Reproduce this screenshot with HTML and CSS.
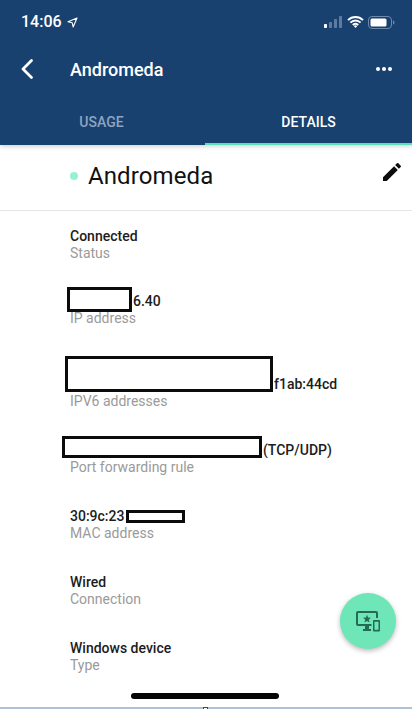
FILE: index.html
```html
<!DOCTYPE html>
<html lang="en">
<head>
<meta charset="utf-8">
<title>Andromeda</title>
<link rel="stylesheet" href="styles.css">
</head>
<body>
<div class="screen">
  <header class="header">
    <div class="status">
      <div class="clock"><span>14:06</span>
        <svg class="loc" viewBox="0 0 11 11" width="11" height="11"><path d="M10 1 1 4.800 5.200 5.800 6.200 10Z" fill="none" stroke="#fff" stroke-width="1.100" stroke-linejoin="round"/></svg>
      </div>
      <div class="sys">
        <svg width="19" height="12" viewBox="0 0 19 12"><rect x="0" y="8" width="3" height="4" rx=".7" fill="#fff"/><rect x="5" y="6" width="3" height="6" rx=".7" fill="#5d7c9f"/><rect x="10" y="3" width="3" height="9" rx=".7" fill="#5d7c9f"/><rect x="15" y="0" width="3" height="12" rx=".7" fill="#5d7c9f"/></svg>
        <svg width="17" height="12" viewBox="0 0 17 12"><path d="M1 4.200a10.500 10.500 0 0 1 15 0M3.400 6.700a7 7 0 0 1 10.200 0M5.800 9a3.600 3.600 0 0 1 5.400 0" fill="none" stroke="#fff" stroke-width="1.900"/><path d="M8.500 12 6.800 10a2.600 2.600 0 0 1 3.400 0Z" fill="#fff"/></svg>
        <svg width="27" height="13" viewBox="0 0 27 13"><rect x=".5" y=".5" width="23" height="12" rx="3.500" fill="none" stroke="#6c89a9"/><rect x="2.500" y="2.500" width="16" height="8" rx="1.500" fill="#fff"/><path d="M25 4.500c1 .3 1.500 1 1.500 2s-.5 1.700-1.500 2Z" fill="#6c89a9"/></svg>
      </div>
    </div>
    <div class="bar">
      <svg class="back" width="14" height="22" viewBox="0 0 14 22"><path d="M11.500 2.500 3 11l8.500 8.500" fill="none" stroke="#fff" stroke-width="2.800" stroke-linecap="round" stroke-linejoin="round"/></svg>
      <div class="bar-title">Andromeda</div>
      <div class="more"><i></i><i></i><i></i></div>
    </div>
    <nav class="tabs">
      <div class="tab tab-usage">USAGE</div>
      <div class="tab tab-active">DETAILS</div>
    </nav>
  </header>
  <section class="name-row">
    <span class="dot"></span>
    <h1 class="name">Andromeda</h1>
    <svg class="edit" width="24" height="24" viewBox="0 0 24 24"><path d="M3 17.250V21h3.750L17.810 9.940l-3.750-3.750L3 17.250zM20.710 7.040a1 1 0 0 0 0-1.410l-2.340-2.340a1 1 0 0 0-1.410 0l-1.830 1.830 3.750 3.750 1.830-1.830z" fill="#0d0d0d"/></svg>
  </section>
  <main class="details">
    <div class="item item-status"><div class="value">Connected</div><div class="label">Status</div></div>
    <div class="item item-ip"><div class="value"><span class="mask mask-ip"></span>6.40</div><div class="label">IP address</div></div>
    <div class="item item-v6"><div class="value"><span class="mask mask-v6"></span>f1ab:44cd</div><div class="label">IPV6 addresses</div></div>
    <div class="item item-port"><div class="value"><span class="mask mask-port"></span>(TCP/UDP)</div><div class="label">Port forwarding rule</div></div>
    <div class="item item-mac"><div class="value">30:9c:23<span class="mask mask-mac"></span></div><div class="label">MAC address</div></div>
    <div class="item item-wired"><div class="value">Wired</div><div class="label">Connection</div></div>
    <div class="item item-type"><div class="value">Windows device</div><div class="label">Type</div></div>
  </main>
  <button class="fab" type="button" aria-label="Devices">
    <svg width="24" height="21" viewBox="0 0 24 21"><path d="M2 0h18a2 2 0 0 1 2 2v5h-2V2H2v11h13.500v2H13v3h2v2H7v-2h2v-3H2a2 2 0 0 1-2-2V2a2 2 0 0 1 2-2z" fill="#256b53"/><path d="M11 3.800l1.100 2.700 2.900.2-2.200 1.900.7 2.800-2.500-1.500-2.500 1.500.7-2.800L7 6.700l2.900-.2z" fill="#256b53"/><path d="M18 9h5a1 1 0 0 1 1 1v9.500a1 1 0 0 1-1 1h-5a1 1 0 0 1-1-1V10a1 1 0 0 1 1-1zm.5 1.800v8h4v-8z" fill="#256b53"/></svg>
  </button>
  <div class="home"></div>
  <div class="edge"><span class="edge-mark"></span></div>
</div>
</body>
</html>
```
FILE: styles.css
```css
* { box-sizing: border-box; }
html, body { margin: 0; padding: 0; }
body { background: #fff; font-family: Roboto, "Liberation Sans", sans-serif; }
.screen { position: relative; width: 412px; height: 709px; overflow: hidden; background: #fff; }

.header { height: 145px; background: #184170; color: #fff; display: flex; flex-direction: column; position: relative; box-shadow: 0 1px 5px rgba(0,0,0,.22); }
.status { height: 44px; padding: 8px 17px 0 21px; display: flex; justify-content: space-between; align-items: flex-start; }
.clock { display: flex; align-items: center; gap: 5px; font-size: 16px; font-weight: 500; line-height: 28px; }
.sys { display: flex; align-items: center; gap: 4px; height: 28px; }
.bar { height: 50px; display: flex; align-items: center; padding: 0 20px; }
.back { flex: none; margin-right: 36px; }
.bar-title { font-size: 18px; font-weight: 500; flex: 1; }
.more { display: flex; gap: 2px; }
.more i { width: 4px; height: 4px; background: #fff; border-radius: 50%; display: block; }
.tabs { flex: 1; display: flex; }
.tab { text-align: center; font-size: 14px; font-weight: 500; color: #8fa5c0; padding-top: 20px; }
.tab-usage { width: 205px; padding-right: 2px; }
.tab-active { width: 207px; color: #fff; border-bottom: 2px solid #5ce0bb; }

.name-row { height: 66px; display: flex; align-items: center; padding: 0 8px 4px 70px; border-bottom: 1px solid #e6e6e6; }
.dot { width: 8px; height: 8px; border-radius: 50%; background: #93f2d4; margin-right: 10px; flex: none; }
.name { margin: 0; font-size: 24px; font-weight: 400; color: #111; flex: 1; letter-spacing: .1px; }
.edit { margin-top: -8px; }

.details { padding-left: 70px; }
.item { display: flex; flex-direction: column; align-items: flex-start; }
.value { font-size: 14px; font-weight: 500; color: #1c1c1c; line-height: 17px; height: 17px; display: flex; align-items: flex-end; white-space: nowrap; }
.label { font-size: 14px; color: #9a9a9a; line-height: 17px; height: 17px; }
.mask { display: block; background: #fff; border: 3px solid #0b0b0b; flex: none; }
.item-status { margin-top: 17px; }
.item-ip { margin-top: 31px; }
.item-v6 { margin-top: 49px; }
.item-port { margin-top: 32px; }
.item-mac { margin-top: 32px; }
.item-wired { margin-top: 32px; }
.item-type { margin-top: 32px; }
.mask-ip { width: 65px; height: 25px; margin: 0 1px -2px -3px; }
.mask-v6 { width: 208px; height: 36px; margin: 0 1px 1px -5px; }
.mask-port { width: 200px; height: 22px; margin: 0 1px 1px -8px; }
.mask-mac { width: 59px; height: 13px; margin: 0 0 2px 2px; }

.fab { position: absolute; left: 340px; top: 593px; width: 56px; height: 56px; border: 0; border-radius: 50%; background: #6ee6b8; box-shadow: 0 2px 5px rgba(0,0,0,.28); display: flex; align-items: center; justify-content: center; padding: 0; }
.home { position: absolute; left: 131px; top: 693px; width: 148px; height: 6px; background: #050505; border-radius: 3px; }
.edge { position: absolute; left: 0; right: 0; bottom: 0; height: 2px; background: #b0c0d6; }
.edge-mark { position: absolute; left: 203px; top: 0; width: 5px; height: 2px; background: #fff; border: 1px solid #444; border-bottom: 0; }
```
